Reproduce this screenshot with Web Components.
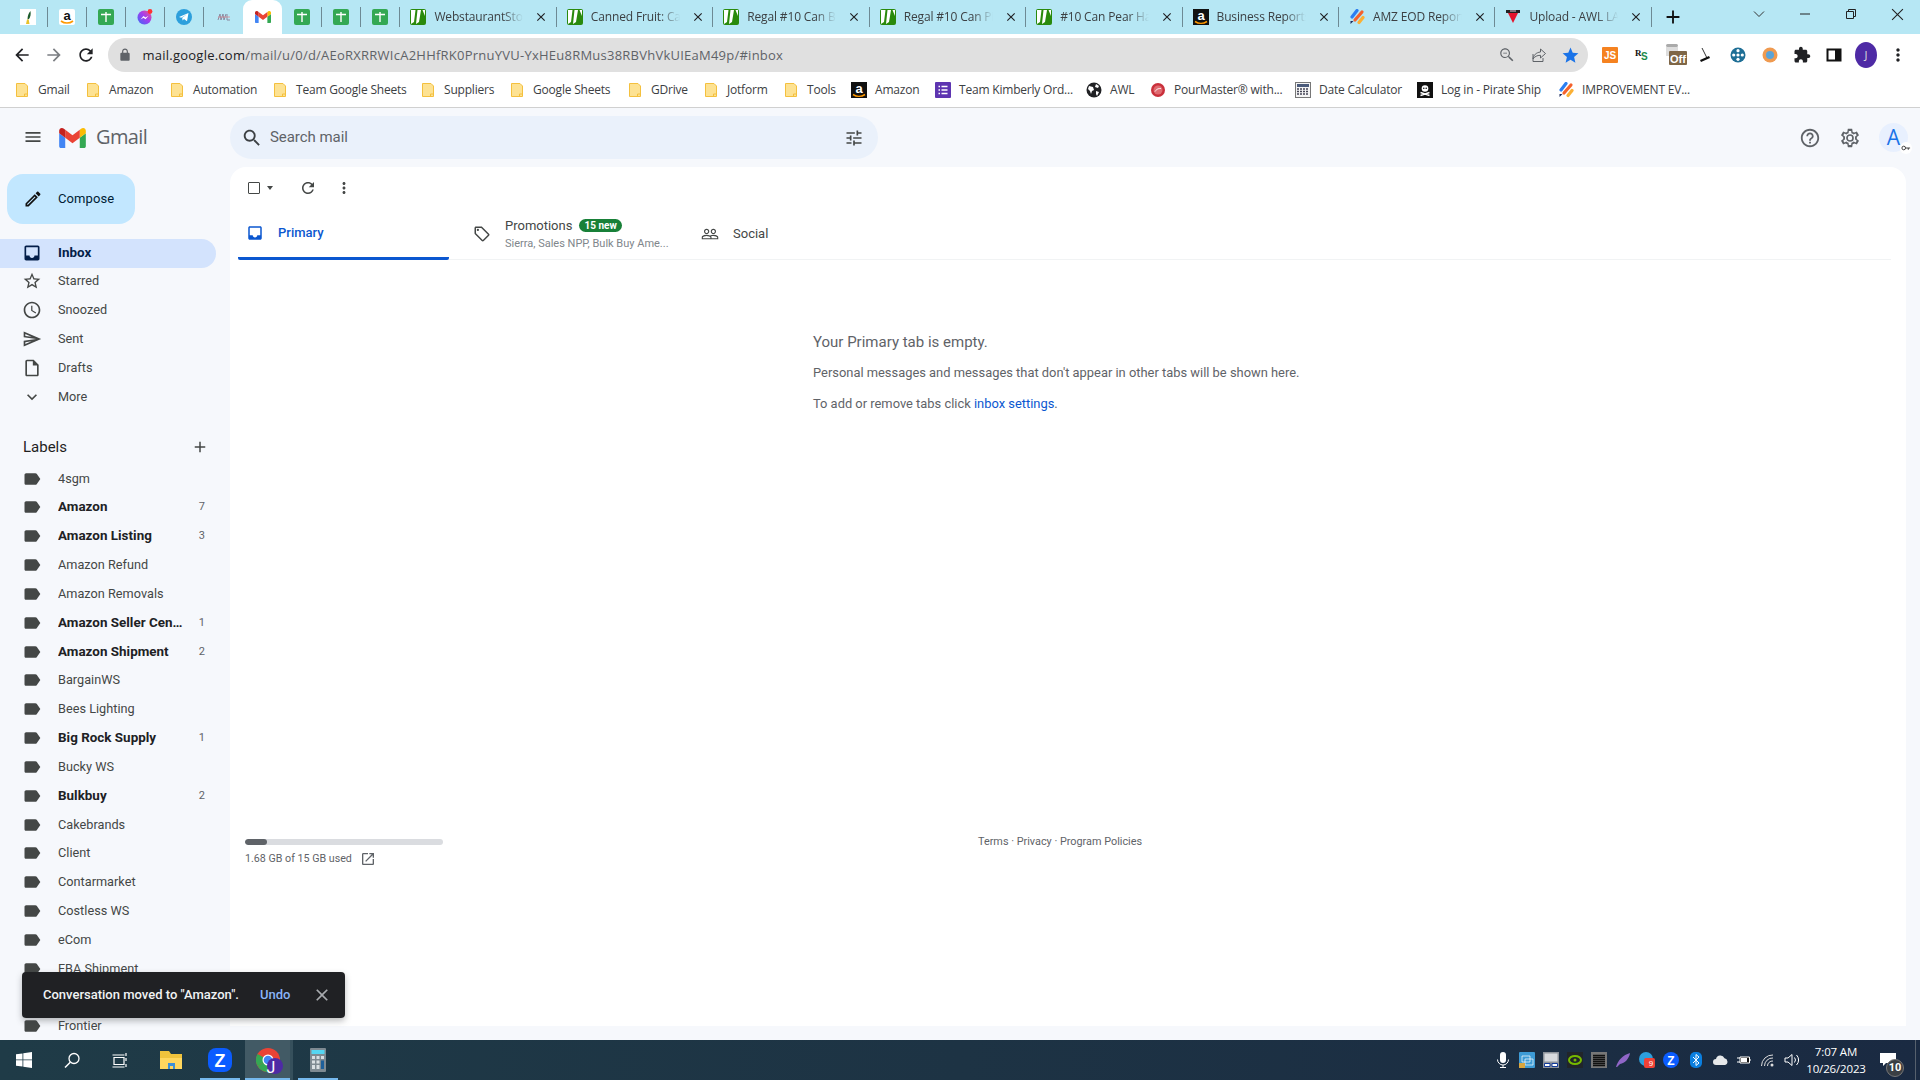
<!DOCTYPE html>
<html lang="en"><head><meta charset="utf-8"><title>Inbox</title>
<style>
html,body{margin:0;height:100%;overflow:hidden;background:#f6f8fc}
body{font-family:Roboto,"Liberation Sans",sans-serif}
</style></head><body>
<chrome-window></chrome-window>
<script>
const P={
menu:'M3 18h18v-2H3v2zm0-5h18v-2H3v2zm0-7v2h18V6H3z',
search:'M15.5 14h-.79l-.28-.27C15.41 12.59 16 11.11 16 9.5 16 5.91 13.09 3 9.5 3S3 5.91 3 9.5 5.91 16 9.5 16c1.61 0 3.09-.59 4.23-1.57l.27.28v.79l5 4.99L20.49 19l-4.99-5zm-6 0C7.01 14 5 11.99 5 9.5S7.01 5 9.5 5 14 7.01 14 9.5 11.99 14 9.5 14z',
tune:'M3 17v2h6v-2H3zM3 5v2h10V5H3zm10 16v-2h8v-2h-8v-2h-2v6h2zM7 9v2H3v2h4v2h2V9H7zm14 4v-2H11v2h10zm-6-4h2V7h4V5h-4V3h-2v6z',
edit:'M14.06 9.02l.92.92L5.92 19H5v-.92l9.06-9.06M17.66 3c-.25 0-.51.1-.7.29l-1.83 1.83 3.75 3.75 1.83-1.83c.39-.39.39-1.02 0-1.41l-2.34-2.34c-.2-.2-.45-.29-.71-.29zm-3.6 3.19L3 17.25V21h3.75L17.81 9.94l-3.75-3.75z',
inbox:'M19 3H5c-1.1 0-2 .9-2 2v14c0 1.1.9 2 2 2h14c1.1 0 2-.9 2-2V5c0-1.1-.9-2-2-2zm0 12h-4c0 1.66-1.35 3-3 3s-3-1.34-3-3H5V5h14v10z',
star:'M22 9.24l-7.19-.62L12 2 9.19 8.63 2 9.24l5.46 4.73L5.82 21 12 17.27 18.18 21l-1.63-7.03L22 9.24zM12 15.4l-3.76 2.27 1-4.28-3.32-2.88 4.38-.38L12 6.1l1.71 4.04 4.38.38-3.32 2.88 1 4.28L12 15.4z',
clock:'M11.99 2C6.47 2 2 6.48 2 12s4.47 10 9.99 10C17.52 22 22 17.52 22 12S17.52 2 11.99 2zM12 20c-4.42 0-8-3.58-8-8s3.58-8 8-8 8 3.58 8 8-3.58 8-8 8zm.5-13H11v6l5.25 3.15.75-1.23-4.5-2.67z',
send:'M4.01 6.03l7.51 3.22-7.52-1 .01-2.22m7.5 8.72L4 17.97v-2.22l7.51-1M2.01 3L2 10l15 2-15 2 .01 7L23 12 2.01 3z',
draft:'M14 2H6c-1.1 0-2 .9-2 2v16c0 1.1.9 2 2 2h12c1.1 0 2-.9 2-2V8l-6-6zM6 20V4h7v5h5v11H6z',
expand:'M16.59 8.59L12 13.17 7.41 8.59 6 10l6 6 6-6z',
label:'M17.63 5.84C17.27 5.33 16.67 5 16 5L5 5.01C3.9 5.01 3 5.9 3 7v10c0 1.1.9 1.99 2 1.99L16 19c.67 0 1.27-.33 1.63-.84L22 12l-4.37-6.16z',
add:'M19 13h-6v6h-2v-6H5v-2h6V5h2v6h6v2z',
refresh:'M17.65 6.35C16.2 4.9 14.21 4 12 4c-4.42 0-7.99 3.58-7.99 8s3.57 8 7.99 8c3.73 0 6.84-2.55 7.73-6h-2.08c-.82 2.33-3.04 4-5.65 4-3.31 0-6-2.69-6-6s2.69-6 6-6c1.66 0 3.14.69 4.22 1.78L13 11h7V4l-2.35 2.35z',
more:'M12 8c1.1 0 2-.9 2-2s-.9-2-2-2-2 .9-2 2 .9 2 2 2zm0 2c-1.1 0-2 .9-2 2s.9 2 2 2 2-.9 2-2-.9-2-2-2zm0 6c-1.1 0-2 .9-2 2s.9 2 2 2 2-.9 2-2-.9-2-2-2z',
tag:'M21.41 11.58l-9-9C12.05 2.22 11.55 2 11 2H4c-1.1 0-2 .9-2 2v7c0 .55.22 1.05.59 1.42l9 9c.36.36.86.58 1.41.58.55 0 1.05-.22 1.41-.59l7-7c.37-.36.59-.86.59-1.41 0-.55-.23-1.06-.59-1.42zM13 20.01L4 11V4h7v-.01l9 9-7 7.02zM6.5 5A1.5 1.5 0 1 0 6.5 8 1.5 1.5 0 1 0 6.5 5z',
people:'M16.5 13c-1.2 0-3.07.34-4.5 1-1.43-.67-3.3-1-4.5-1C5.33 13 1 14.08 1 16.25V19h22v-2.75c0-2.17-4.33-3.25-6.5-3.25zm-4 4.5h-10v-1.25c0-.54 2.56-1.75 5-1.75s5 1.21 5 1.75v1.25zm9 0H14v-1.25c0-.46-.2-.86-.52-1.22.88-.3 1.96-.53 3.02-.53 2.44 0 5 1.21 5 1.75v1.25zM7.5 12c1.93 0 3.5-1.57 3.5-3.5S9.43 5 7.5 5 4 6.57 4 8.5 5.57 12 7.5 12zm0-5.5c1.1 0 2 .9 2 2s-.9 2-2 2-2-.9-2-2 .9-2 2-2zm9 5.5c1.93 0 3.5-1.57 3.5-3.5S18.43 5 16.5 5 13 6.57 13 8.5s1.57 3.5 3.5 3.5zm0-5.5c1.1 0 2 .9 2 2s-.9 2-2 2-2-.9-2-2 .9-2 2-2z',
help:'M11 18h2v-2h-2v2zm1-16C6.48 2 2 6.48 2 12s4.48 10 10 10 10-4.48 10-10S17.52 2 12 2zm0 18c-4.41 0-8-3.59-8-8s3.59-8 8-8 8 3.59 8 8-3.59 8-8 8zm0-14c-2.21 0-4 1.79-4 4h2c0-1.1.9-2 2-2s2 .9 2 2c0 2-3 1.75-3 5h2c0-2.25 3-2.5 3-5 0-2.21-1.79-4-4-4z',
open:'M19 19H5V5h7V3H5c-1.11 0-2 .9-2 2v14c0 1.1.89 2 2 2h14c1.1 0 2-.9 2-2v-7h-2v7zM14 3v2h3.59l-9.83 9.83 1.41 1.41L19 6.41V10h2V3h-7z',
close:'M19 6.41L17.59 5 12 10.59 6.41 5 5 6.41 10.59 12 5 17.59 6.41 19 12 13.41 17.59 19 19 17.59 13.41 12z',
back:'M20 11H7.83l5.59-5.59L12 4l-8 8 8 8 1.41-1.41L7.83 13H20v-2z',
fwd:'M12 4l-1.41 1.41L16.17 11H4v2h12.17l-5.58 5.59L12 20l8-8z',
lock:'M18 8h-1V6c0-2.76-2.24-5-5-5S7 3.24 7 6v2H6c-1.1 0-2 .9-2 2v10c0 1.1.9 2 2 2h12c1.1 0 2-.9 2-2V10c0-1.1-.9-2-2-2zM9 6c0-1.66 1.34-3 3-3s3 1.34 3 3v2H9V6z',
zoomout:'M15.5 14h-.79l-.28-.27C15.41 12.59 16 11.11 16 9.5 16 5.91 13.09 3 9.5 3S3 5.91 3 9.5 5.91 16 9.5 16c1.61 0 3.09-.59 4.23-1.57l.27.28v.79l5 4.99L20.49 19l-4.99-5zm-6 .5C6.5 14.500 4.500 12.500 4.500 9.500S6.500 4.500 9.500 4.500 14.500 6.500 14.500 9.500 12.500 14.500 9.500 14.500zM7 9h5v1H7z',
fstar:'M12 17.27L18.18 21l-1.64-7.03L22 9.24l-7.19-.61L12 2 9.19 8.63 2 9.24l5.46 4.73L5.82 21z',
puzzle:'M20.5 11H19V7c0-1.1-.9-2-2-2h-4V3.5C13 2.12 11.88 1 10.5 1S8 2.12 8 3.5V5H4c-1.1 0-1.99.9-1.99 2v3.8H3.5c1.49 0 2.7 1.21 2.7 2.7s-1.21 2.7-2.7 2.7H2V20c0 1.1.9 2 2 2h3.8v-1.5c0-1.49 1.21-2.7 2.7-2.7 1.49 0 2.7 1.21 2.7 2.7V22H17c1.1 0 2-.9 2-2v-4h1.5c1.38 0 2.5-1.12 2.5-2.5S21.88 11 20.5 11z'
};
const ic=(n,s=20,c='#444746',st='')=>`<svg xmlns="http://www.w3.org/2000/svg" width="${s}" height="${s}" viewBox="0 0 24 24" fill="${c}" style="display:block;flex:none;${st}"><path d="${P[n]}"/></svg>`;
const GM=(w=16,h=w*.75)=>`<svg width="${w}" height="${h}" viewBox="52 42 88 66" style="display:block;flex:none"><path fill="#4285f4" d="M58 108h14V74L52 59v43c0 3.32 2.69 6 6 6"/><path fill="#34a853" d="M120 108h14c3.32 0 6-2.69 6-6V59l-20 15"/><path fill="#fbbc04" d="M120 48v26l20-15v-8c0-7.42-8.47-11.65-14.4-7.2"/><path fill="#ea4335" d="M72 74V48l24 18 24-18v26L96 92"/><path fill="#c5221f" d="M52 51v8l20 15V48l-5.6-4.2c-5.94-4.45-14.4-.22-14.4 7.2"/></svg>`;
const sv=(b,s=16,vb='0 0 16 16')=>`<svg width="${s}" height="${s}" viewBox="${vb}" style="display:block;flex:none">${b}</svg>`;
const F={
quill:sv('<rect width="16" height="16" fill="#fff"/><path d="M10.500 2C8.500 4 7.500 7 7.500 10.500L9 10C10.500 8 11 5 10.500 2z" fill="#1d5b2c"/><path d="M6 15h3.500l-.8-4.500H7z" fill="#e8c22a"/>'),
amz:sv('<rect width="16" height="16" rx="2" fill="#fff"/><text x="8" y="10.500" font-size="13" font-weight="700" text-anchor="middle" font-family="Liberation Sans" fill="#111">a</text><path d="M2 12c3.500 2.700 8.500 2.700 12 0" stroke="#f90" stroke-width="1.600" fill="none"/>'),
sheets:sv('<rect width="16" height="16" rx="2" fill="#34a853"/><path d="M3 5.500h10M8 3v10" stroke="#fff" stroke-width="1.400"/>'),
msgr:sv('<defs><linearGradient id="mg" x1="0" y1="1" x2="1" y2="0"><stop offset="0" stop-color="#3b6cf5"/><stop offset=".55" stop-color="#a33df0"/><stop offset="1" stop-color="#f8577d"/></linearGradient></defs><circle cx="7.500" cy="8.500" r="7" fill="url(#mg)"/><path d="M3.500 10.500l3-3.500 2 1.500 3-1.800-3 3.600-2-1.500z" fill="#fff"/><circle cx="13" cy="2.500" r="2.400" fill="#f33"/>'),
tg:sv('<circle cx="8" cy="8" r="8" fill="#2d9fdc"/><path d="M3 8l9.500-4L11 12.300 8 10l-1.400 1.600-.4-2.800L11 5.300 5.200 8.800z" fill="#fff"/>'),
awl:sv('<path d="M2 11L4 5l1 6 2-6 1 6 2-6M11 5v6h3" fill="none" stroke="#8a8aa0" stroke-width="1"/><path d="M2 8h12" stroke="#d9868f" stroke-width=".8"/>'),
gm:GM(16,12),
w:sv('<rect width="16" height="16" rx="2" fill="#2a8a0c"/><path d="M1 1h4.500L4 13 1 15zM7.500 1H11L9 13 6 15z" fill="#fff"/><path d="M12.500 1H15v6z" fill="#fff"/>'),
amzb:sv('<rect width="16" height="16" fill="#111"/><text x="8" y="10.500" font-size="13" font-weight="700" text-anchor="middle" font-family="Liberation Sans" fill="#fff">a</text><path d="M2 12.500c3.500 2.300 8.500 2.300 12 0" stroke="#f90" stroke-width="1.500" fill="none"/>'),
bars:sv('<path d="M3 8L8 1.500" stroke="#2d7ff0" stroke-width="3.200" stroke-linecap="round"/><path d="M6 11l7-8" stroke="#f4622d" stroke-width="3.200" stroke-linecap="round"/><path d="M10 13.500l4-5" stroke="#fbb034" stroke-width="3.200" stroke-linecap="round"/><path d="M1.500 15v-3h3z" fill="#1b2a5c"/>'),
up:sv('<rect x="1" y="1" width="14" height="3" fill="#222"/><path d="M3 4h10l-5 10z" fill="#e4132b"/><path d="M5 2h6" stroke="#e9c9d8" stroke-width="1"/>'),
folder:sv('<path d="M2.500 1.500h8.500l2.500 2.500v10.500h-11z" fill="#fde293" stroke="#f4c03e" stroke-width="1"/><path d="M10.500 14.500v-2.500h3" fill="none" stroke="#f4c03e"/>'),
form:sv('<rect width="16" height="16" rx="1" fill="#5e35b1"/><path d="M3.500 4.500h1.500M6.500 4.500h6M3.500 8h1.500M6.500 8h6M3.500 11.500h1.500M6.500 11.500h6" stroke="#fff" stroke-width="1.500"/>'),
globe:sv('<circle cx="8" cy="8" r="7.500" fill="#202124"/><path d="M3 4l4 1 1 3-2 1-1 3-1-3-2-2zM10 2l3 2-1 2-3-1zM10 9l3 1-2 4-1-2z" fill="#fff"/>'),
pour:sv('<circle cx="8" cy="8" r="7" fill="#c9303b"/><circle cx="8" cy="8" r="4.500" fill="#e06a70"/><path d="M5 9.500c2-3 4-3 6-3" stroke="#fff" stroke-width="1" fill="none"/>'),
calc:sv('<rect x=".5" y=".5" width="15" height="15" fill="#f4f4f4" stroke="#777"/><rect x="2" y="2" width="12" height="3" fill="#4a5a7a"/><path d="M2 7h12M2 9.500h12M2 12h12" stroke="#445" stroke-width="1.400" stroke-dasharray="2 1"/>'),
pirate:sv('<rect width="16" height="16" fill="#111"/><circle cx="8" cy="6.500" r="3.300" fill="#fff"/><path d="M3.500 10.500l9 3M12.500 10.500l-9 3" stroke="#fff" stroke-width="1.500"/><circle cx="6.800" cy="6.300" r=".8" fill="#111"/><circle cx="9.200" cy="6.300" r=".8" fill="#111"/>')
};
const comp=(name,css,render)=>customElements.define(name,class extends HTMLElement{
  connectedCallback(){if(this.shadowRoot)return;const r=this.attachShadow({mode:'open'});r.innerHTML=`<style>${css}</style>`+render(this);}
});
const UI='"Open Sans","Noto Sans","Liberation Sans",sans-serif';

comp('chrome-window',`:host{display:flex;flex-direction:column;width:1920px;height:1080px;overflow:hidden}`,()=>`
<tab-strip></tab-strip><omni-bar></omni-bar><bookmark-bar></bookmark-bar><gmail-app></gmail-app><task-bar></task-bar>`);

comp('chrome-tab',`:host{display:flex;align-items:center;box-sizing:border-box;position:relative;height:34px;width:39.2px;justify-content:center;flex:none;font:12px/16px ${UI};color:#3c4043}
:host([title-tab]){width:156.45px;justify-content:flex-start;padding-left:10.5px}
:host([sep])::after{content:"";position:absolute;right:-.5px;top:7px;height:20px;width:1px;background:#6d8a94}
:host([active]){background:#fff;border-radius:9px 9px 0 0}
.t{width:91px;margin-left:8px;overflow:hidden;white-space:nowrap;letter-spacing:-.15px;-webkit-mask-image:linear-gradient(90deg,#000 75%,transparent 98%);mask-image:linear-gradient(90deg,#000 75%,transparent 98%)}
.x{position:absolute;right:8px;top:10px}`,
e=>F[e.getAttribute('fav')]+(e.hasAttribute('title-tab')?`<span class="t"><slot></slot></span><span class="x">${ic('close',14,'#202124')}</span>`:''));

comp('tab-strip',`:host{display:flex;height:34px;flex:none;background:#b6e7f4;padding-left:8px;align-items:flex-start}
.plus{width:44px;height:34px;display:flex;align-items:center;justify-content:center}
.sp{flex:1}
.w{width:46px;height:28px;display:flex;align-items:center;justify-content:center}`,()=>`
${['quill','amz','sheets','msgr','tg'].map(f=>`<chrome-tab fav="${f}" sep></chrome-tab>`).join('')}
<chrome-tab fav="awl"></chrome-tab><chrome-tab fav="gm" active></chrome-tab>
${['sheets','sheets'].map(f=>`<chrome-tab fav="${f}" sep></chrome-tab>`).join('')}<chrome-tab fav="sheets" sep></chrome-tab>
<chrome-tab fav="w" title-tab sep>WebstaurantStore</chrome-tab>
<chrome-tab fav="w" title-tab sep>Canned Fruit: Canned</chrome-tab>
<chrome-tab fav="w" title-tab sep>Regal #10 Can Bartlett</chrome-tab>
<chrome-tab fav="w" title-tab sep>Regal #10 Can Pineapple</chrome-tab>
<chrome-tab fav="w" title-tab sep>#10 Can Pear Halves</chrome-tab>
<chrome-tab fav="amzb" title-tab sep>Business Reports</chrome-tab>
<chrome-tab fav="bars" title-tab sep>AMZ EOD Report</chrome-tab>
<chrome-tab fav="up" title-tab sep>Upload - AWL LABELS</chrome-tab>
<span class="plus">${ic('add',22,'#111')}</span><span class="sp"></span>
<span class="w"><svg width="12" height="12" viewBox="0 0 12 12"><path d="M1 3.500l5 5 5-5" fill="none" stroke="#333"/></svg></span>
<span class="w"><svg width="12" height="12" viewBox="0 0 12 12"><path d="M1 6h10" stroke="#222"/></svg></span>
<span class="w"><svg width="12" height="12" viewBox="0 0 12 12"><path d="M1.500 3.500h7v7h-7zM3.500 3.500v-2h7v7h-2" fill="none" stroke="#222"/></svg></span>
<span class="w"><svg width="13" height="13" viewBox="0 0 12 12"><path d="M1 1l10 10M11 1L1 11" stroke="#222"/></svg></span>`);

comp('omni-bar',`:host{display:flex;align-items:center;height:38px;flex:none;background:#fff;padding-left:6px;box-sizing:border-box;padding-top:4px}
.s{width:32px;height:34px;display:flex;align-items:center;justify-content:center;flex:none;position:relative}
.box{display:flex;align-items:center;width:1480px;height:34px;margin:0 6px;flex:none;background:#e0e0e0;border-radius:17px;box-sizing:border-box;padding-left:10px;font:13px/34px ${UI};color:#5f6368}
.url{margin-left:10.500px;white-space:nowrap;width:1350px;letter-spacing:.24px}
b{font-weight:400;color:#202124}
.box .s{width:32px}
.av{width:22px;height:26px;border-radius:50%;background:#4e2aa5;color:#ddd;font:11px/26px ${UI};text-align:center}
`,()=>`
<span class="s">${ic('back',20,'#202124')}</span><span class="s">${ic('fwd',20,'#7b7e82')}</span><span class="s">${ic('refresh',20,'#202124')}</span>
<div class="box">${ic('lock',14,'#5f6368')}<span class="url"><b>mail.google.com</b>/mail/u/0/d/AEoRXRRWIcA2HHfRK0PrnuYVU-YxHEu8RMus38RBVhVkUIEaM49p/#inbox</span>
<span class="s" style="margin-left:-2px">${ic('zoomout',18,'#5f6368')}</span><span class="s"><svg width="16" height="16" viewBox="0 0 16 16"><path d="M9.500 2l5 4.500-5 4.500V8.300C6 8.300 3.800 9.500 2 12c.5-3.800 3-6.500 7.500-7z" fill="none" stroke="#5f6368"/><path d="M2 7v7.500h10V11" fill="none" stroke="#5f6368"/></svg></span><span class="s">${ic('fstar',19,'#1a73e8')}</span></div>
<span class="s">${sv('<rect width="16" height="16" rx="1" fill="#f58220"/><text x="8" y="12" font-size="10" font-weight="700" text-anchor="middle" font-family="Liberation Sans" fill="#fff">JS</text>')}</span>
<span class="s">${sv('<text x="1" y="9" font-size="9" font-weight="700" font-family="Liberation Serif" fill="#111">R</text><text x="7" y="13" font-size="10" font-weight="700" font-family="Liberation Sans" fill="#1a8a4a">S</text>')}</span>
<span class="s" style="left:3px">${sv('<rect x="1" y="1" width="12" height="3" rx="1.500" fill="#aaa"/><rect x="1" y="4" width="12" height="9" fill="#ddd"/><rect x="4" y="8" width="18" height="14" rx="1" fill="#7e6646"/><text x="13" y="19.500" font-size="11" font-weight="700" text-anchor="middle" font-family="Liberation Sans" fill="#fff">Off</text>',24,'0 0 24 24')}</span>
<span class="s">${sv('<path d="M4 1l5 10" stroke="#333" stroke-width="1"/><path d="M3 15l9-4-1-2-9 4z" fill="#111"/>')}</span>
<span class="s">${sv('<circle cx="8" cy="8" r="7.500" fill="#1f6f96"/><circle cx="8" cy="8" r="1.600" fill="#fff"/><circle cx="8" cy="3.700" r="1.600" fill="#fff"/><circle cx="8" cy="12.300" r="1.600" fill="#fff"/><circle cx="3.700" cy="8" r="1.600" fill="#fff"/><circle cx="12.300" cy="8" r="1.600" fill="#fff"/>')}</span>
<span class="s">${sv('<circle cx="8" cy="8" r="7.500" fill="#ef9a50"/><circle cx="8" cy="8" r="4" fill="#5aa3d8"/>')}</span>
<span class="s">${ic('puzzle',18,'#202124')}</span>
<span class="s">${sv('<rect x="1.500" y="2.500" width="13" height="11" fill="#fff" stroke="#111" stroke-width="2"/><rect x="9" y="2" width="6" height="12" fill="#111"/>')}</span>
<span class="s"><span class="av">J</span></span>
<span class="s">${ic('more',20,'#202124')}</span>`);

comp('book-mark',`:host{display:flex;align-items:center;flex:none;gap:8px;font:12px/16px ${UI};color:#3c4043;white-space:nowrap;letter-spacing:-.2px}`,
e=>F[e.getAttribute('fav')||'folder']+`<span><slot></slot></span>`);
comp('bookmark-bar',`:host{display:flex;align-items:center;height:36px;flex:none;background:#fff;box-sizing:border-box;padding-left:14px;border-bottom:1px solid #d0d0d0}`,()=>
[['Gmail',71],['Amazon',84],['Automation',103],['Team Google Sheets',148],['Suppliers',89],['Google Sheets',118],['GDrive',76],['Jotform',80],['Tools',68],['Amazon',84,'amzb'],['Team Kimberly Ord...',151,'form'],['AWL',64,'globe'],['PourMaster® with...',145,'pour'],['Date Calculator',122,'calc'],['Log in - Pirate Ship',141,'pirate'],['IMPROVEMENT EV...',140,'bars']]
.map(b=>`<book-mark style="width:${b[1]}px" fav="${b[2]||'folder'}">${b[0]}</book-mark>`).join(''));

comp('gmail-app',`:host{display:grid;grid-template-columns:230px 1fr;grid-template-rows:59px 1fr;flex:1;min-height:0;background:#f6f8fc;position:relative;overflow:hidden}`,()=>`
<gm-brand></gm-brand><gm-top></gm-top><gm-rail></gm-rail><gm-main></gm-main><gm-snack></gm-snack>`);

comp('gm-brand',`:host{display:flex;align-items:center;padding:0 0 0 23px;height:59px}
.g{margin-left:10px;font:20px/30px "Open Sans",Roboto,sans-serif;color:#5f6368;letter-spacing:-.6px;position:relative;top:-1px}`,()=>`${ic('menu',20,'#444746','position:relative;top:-1px')}<span style="width:16px"></span>${GM(27,20)}<span class="g">Gmail</span>`);

comp('gm-top',`:host{display:flex;align-items:flex-start;padding-top:8px;height:59px;box-sizing:border-box}
.box{display:flex;align-items:center;width:648px;height:43px;background:#eaf1fb;border-radius:22px;padding:0 14px 0 11px;box-sizing:border-box;font:15px/20px Roboto,sans-serif;color:#5f6368;letter-spacing:-.05px}
.ph{flex:1;margin-left:7px;position:relative;top:-1px}
.r{display:flex;margin-left:auto;align-items:center;height:43px;margin-right:12px}
.i{width:41px;height:43px;display:flex;align-items:center;justify-content:center}
.a{position:relative;width:29px;height:29px;border-radius:50%;background:#e8f0fe;color:#1a73e8;font:21px/29px "Open Sans",sans-serif;text-align:center;margin-left:8px}
.k{position:absolute;right:-4px;bottom:-2px;width:12px;height:12px;border-radius:50%;background:#fff;display:flex;align-items:center;justify-content:center}`,()=>`
<div class="box">${ic('search',22,'#3c4043')}<span class="ph">Search mail</span>${ic('tune',20,'#444746')}</div>
<div class="r"><span class="i">${ic('help',22,'#5f6368')}</span><span class="i" style="position:relative;left:-1px"><svg width="22" height="22" viewBox="0 0 24 24"><path fill="#5f6368" d="M19.43 12.98c.04-.32.07-.64.07-.98s-.03-.66-.07-.98l2.11-1.65c.19-.15.24-.42.12-.64l-2-3.46c-.12-.22-.39-.3-.61-.22l-2.49 1c-.52-.4-1.08-.73-1.69-.98l-.38-2.65C14.46 2.18 14.25 2 14 2h-4c-.25 0-.46.18-.49.42l-.38 2.65c-.61.25-1.17.59-1.69.98l-2.49-1c-.23-.09-.49 0-.61.22l-2 3.46c-.13.22-.07.49.12.64l2.11 1.65c-.04.32-.07.65-.07.98s.03.66.07.98l-2.11 1.65c-.19.15-.24.42-.12.64l2 3.46c.12.22.39.3.61.22l2.49-1c.52.4 1.08.73 1.69.98l.38 2.65c.03.24.24.42.49.42h4c.25 0 .46-.18.49-.42l.38-2.65c.61-.25 1.17-.59 1.69-.98l2.49 1c.23.09.49 0 .61-.22l2-3.46c.12-.22.07-.49-.12-.64l-2.11-1.65z"/><path fill="#f6f8fc" d="M17.500 12c0-.5-.05-1-.12-1.400l1.900-1.500-1.100-1.900-2.240.9c-.7-.6-1.500-1.100-2.400-1.400l-.34-2.400h-2.400l-.34 2.400c-.9.300-1.700.8-2.400 1.400l-2.240-.9-1.100 1.900 1.900 1.500c-.14.900-.14 1.900 0 2.800l-1.900 1.500 1.100 1.900 2.240-.9c.7.6 1.500 1.100 2.400 1.400l.34 2.400h2.400l.34-2.400c.9-.3 1.700-.8 2.400-1.400l2.240.9 1.100-1.900-1.900-1.500c.07-.4.12-.9.12-1.400z"/><circle cx="12" cy="12" r="3.300" fill="none" stroke="#5f6368" stroke-width="1.800"/></svg></span>
<span class="a">A<span class="k">${sv('<circle cx="3" cy="5" r="2" fill="none" stroke="#333"/><path d="M5 5h5M8 5v2" stroke="#333"/>',10,'0 0 11 10')}</span></span></div>`);

comp('nav-row',`:host{display:flex;align-items:center;height:28.84px;flex:none;width:216px;box-sizing:border-box;padding:0 0 1.500px 22px;font:400 12.7px/20px Roboto,sans-serif;color:#444746;border-radius:0 15px 15px 0;white-space:nowrap}
:host([active]){background:#d3e3fd;color:#041e49;font-weight:700;font-size:13.4px}
:host([unread]){font-weight:700;color:#202124;font-size:13.4px}
.i{width:20px;height:20px;display:flex;margin-right:16px}
.t{flex:1;overflow:hidden;text-overflow:ellipsis;margin-right:12px;letter-spacing:.02px}
.c{font:400 11px/14px Roboto,sans-serif;color:#5f6368;padding-right:11px}`,
e=>`<span class="i">${ic(e.getAttribute('icon'),20,e.hasAttribute('active')?'#041e49':'#444746')}</span><span class="t"><slot></slot></span>${e.getAttribute('count')?`<span class="c">${e.getAttribute('count')}</span>`:''}`);

comp('gm-rail',`:host{display:block;padding-top:7px;overflow:hidden;min-height:0}
.comp{display:flex;align-items:center;width:128px;height:50px;margin-left:7px;box-sizing:border-box;padding:0 0 1px 16px;background:#c2e7ff;border-radius:16px;font:400 13px/20px Roboto,sans-serif;color:#001d35;margin-bottom:15px;letter-spacing:.1px}
.comp span{margin-left:15px}
.lab{display:flex;align-items:center;justify-content:space-between;height:30px;margin:20px 0 3px;padding:0 7px 0 23px;width:216px;box-sizing:border-box;font:400 15px/20px Roboto,sans-serif;color:#1f1f1f}`,()=>`
<div class="comp">${ic('edit',20,'#111')}<span>Compose</span></div>
<nav-row icon="inbox" active>Inbox</nav-row><nav-row icon="star">Starred</nav-row><nav-row icon="clock">Snoozed</nav-row><nav-row icon="send">Sent</nav-row><nav-row icon="draft">Drafts</nav-row><nav-row icon="expand">More</nav-row>
<div class="lab"><span>Labels</span>${ic('add',18,'#444746')}</div>
${[['4sgm'],['Amazon',7],['Amazon Listing',3],['Amazon Refund'],['Amazon Removals'],['Amazon Seller Central',1],['Amazon Shipment',2],['BargainWS'],['Bees Lighting'],['Big Rock Supply',1],['Bucky WS'],['Bulkbuy',2],['Cakebrands'],['Client'],['Contarmarket'],['Costless WS'],['eCom'],['FBA Shipment'],[''],['Frontier']].map(l=>`<nav-row icon="label" ${l[1]?`unread count="${l[1]}"`:''}>${l[0]}</nav-row>`).join('')}`);

comp('gm-main',`:host{display:flex;flex-direction:column;min-height:0;background:#fff;border-radius:16px 16px 0 0;margin:0 14px 14px 0;padding:0 15px 0 8px}
.tool{display:flex;align-items:center;height:41px;flex:none;padding-left:10px}
.tool .cb{width:10px;height:10px;border:1.5px solid #444746;border-radius:1px}
.car{width:0;height:0;border:3.5px solid transparent;border-top:4px solid #444746;margin:4px 0 0 7px}
.tabs{display:flex;height:52px;flex:none;border-bottom:1px solid #f1f3f4;box-sizing:border-box}
.body{flex:1;display:flex;flex-direction:column;padding-top:71.500px;font:12.9px/20px Roboto,sans-serif;color:#5f6368}
.msg{margin-left:575px}
.msg h2{font:400 15px/20px Roboto,sans-serif;margin:0 0 11px;color:#5f6368}
.msg p{margin:0 0 11px}
a{color:#0b57d0;text-decoration:none}
.foot{margin-top:auto;display:grid;grid-template-columns:198px 1fr;padding:0 0 159px 7px;font:10.7px/16px Roboto,sans-serif;color:#5f6368}
.bar{height:6px;background:#dadce0;border-radius:3px;overflow:hidden}
.bar i{display:block;width:22px;height:6px;background:#5f6368;border-radius:3px}
.st{display:flex;align-items:center;margin-top:6px;white-space:nowrap}
.st svg{margin-left:8px}
.terms{margin-left:535px;white-space:nowrap;margin-top:-5px;font-size:10.85px}`,()=>`
<div class="tool"><span class="cb"></span><span class="car"></span><span style="width:26px"></span>${ic('refresh',18,'#444746')}<span style="width:18px"></span>${ic('more',18,'#444746')}</div>
<div class="tabs"><gm-tab icon="inbox" active style="width:211px">Primary</gm-tab><gm-tab icon="tag" sub="Sierra, Sales NPP, Bulk Buy Ame..." badge="15 new" style="width:244px;padding-left:24px">Promotions</gm-tab><gm-tab icon="people" style="width:200px;padding-left:8px">Social</gm-tab></div>
<div class="body"><div class="msg"><h2>Your Primary tab is empty.</h2><p>Personal messages and messages that don't appear in other tabs will be shown here.</p><p>To add or remove tabs click <a href="#">inbox settings</a>.</p></div>
<div class="foot"><div><div class="bar"><i></i></div><div class="st">1.68 GB of 15 GB used ${ic('open',16,'#5f6368')}</div></div><div class="terms">Terms · Privacy · Program Policies</div></div></div>`);

comp('gm-tab',`:host{display:flex;align-items:center;height:52px;box-sizing:border-box;padding:0 0 0 8px;position:relative;font:400 13px/16px Roboto,sans-serif;color:#444746;flex:none}
:host([active]){color:#0b57d0;border-bottom:3px solid #0b57d0;border-radius:0 0 2px 2px;font-weight:500}
.i{margin-right:14px}
.m{display:flex;align-items:center;gap:7px}
.b{background:#188038;color:#fff;font:700 10px/13px Roboto,sans-serif;border-radius:7px;padding:0 5px}
.s{font:400 11px/15px Roboto,sans-serif;color:#80868b;white-space:nowrap;margin-top:2px}`,
e=>{const a=e.hasAttribute('active');return `<span class="i">${ic(e.getAttribute('icon'),18,a?'#0b57d0':'#444746')}</span><div><div class="m"><slot></slot>${e.getAttribute('badge')?`<span class="b">${e.getAttribute('badge')}</span>`:''}</div>${e.getAttribute('sub')?`<div class="s">${e.getAttribute('sub')}</div>`:''}</div>`});

comp('gm-snack',`:host{position:absolute;left:22px;top:864px;width:323px;height:46px;display:flex;align-items:center;background:#202124;border-radius:4px;box-shadow:0 3px 6px rgba(60,64,67,.35);font:500 13px/20px Roboto,sans-serif;color:#f1f3f4;box-sizing:border-box;padding-left:21px;white-space:nowrap}
.u{color:#8ab4f8;margin-left:21px;font-weight:500}
.x{position:absolute;right:13px;top:13px}`,()=>`<span>Conversation moved to "Amazon".</span><span class="u">Undo</span><span class="x">${ic('close',20,'#a8abaf')}</span>`);

comp('task-bar',`:host{display:flex;align-items:center;height:40px;flex:none;background:linear-gradient(90deg,#1f3b47,#1d3344 50%,#1a2a42);position:relative;color:#fff}
.s{width:48px;height:40px;display:flex;align-items:center;justify-content:center;flex:none;position:relative;box-sizing:border-box}
.on::after{content:"";position:absolute;left:0;right:0;bottom:0;height:2px;background:#76b9ed}
.act{background:#425a65}
.tray{margin-left:auto;display:flex;align-items:center}
.t{width:24.1px;height:40px;display:flex;align-items:center;justify-content:center;flex:none}
.clock{width:64px;text-align:center;font:11.5px/17px ${UI};letter-spacing:-.15px;white-space:nowrap}
.note{position:relative;width:40px;height:40px;display:flex;align-items:center;justify-content:center}
.n{position:absolute;left:18px;top:19px;width:18px;height:18px;border-radius:50%;background:#3a3f44;border:1px solid #777;box-sizing:border-box;font:700 11px/16px Roboto,sans-serif;text-align:center;color:#fff}
.end{width:1px;height:40px;background:#56606d;margin:0 4px 0 7px}`,()=>`
<span class="s">${sv('<path d="M0 2.300L6.500 1.400V7.500H0zM7.300 1.300L16 0v7.500H7.300zM0 8.300h6.500v6.300L0 13.700zM7.300 8.300H16V16L7.300 14.700z" fill="#fff"/>',16)}</span>
<span class="s">${sv('<circle cx="10" cy="6.500" r="5" fill="none" stroke="#fff" stroke-width="1.300"/><path d="M6.300 10.200L1 15.500" stroke="#fff" stroke-width="1.500"/>',16)}</span>
<span class="s">${sv('<path d="M.5 3h12M.5 15h12M2 5.500h10v7H2zM14 1v3M14 6v3M14 12v3" fill="none" stroke="#fff" stroke-width="1.200"/>',16)}</span>
<span class="s" style="width:54px">${sv('<path d="M0 2h9l2 3h11v15H0z" fill="#f0c33c"/><path d="M0 9h22v11H0z" fill="#ffd75e"/><rect x="8" y="14" width="7" height="6" fill="#3d90d6"/><rect x="10" y="17" width="3" height="3" fill="#ffd75e"/>',22,'0 0 22 22')}</span>
<span class="s on" style="width:40px;margin-left:2px">${sv('<rect width="24" height="24" rx="8" fill="#0b5cff"/><text x="12" y="18.500" font-size="18" font-weight="700" text-anchor="middle" font-family="Liberation Sans" fill="#fff">Z</text>',24,'0 0 24 24')}</span>
<span class="s act on" style="width:45px;margin-left:5px"><span style="position:relative;display:block;width:24px;height:24px"><svg width="24" height="24" viewBox="0 0 24 24" style="display:block"><circle cx="12" cy="12" r="12" fill="#ea4335"/><path d="M12 12L1.600 18A12 12 0 0 1 1.600 6z" fill="#34a853"/><path d="M12 12l-10.400 6A12 12 0 0 0 22.400 18z" fill="#34a853"/><path d="M12 12L22.400 18A12 12 0 0 1 12 24z" fill="#fbbc04"/><circle cx="12" cy="12" r="5.500" fill="#fff"/><circle cx="12" cy="12" r="4.300" fill="#4285f4"/></svg><span style="position:absolute;right:-3px;bottom:-2px;width:16px;height:16px;border-radius:50%;background:#4e2aa5;font:10px/16px ${UI};text-align:center">J</span></span></span>
<span style="width:3px;height:40px;background:#36505c;flex:none"></span>
<span class="s on" style="width:40px;margin-left:5px">${sv('<rect x="1" width="16" height="24" rx="1" fill="#7e8a92"/><rect x="2.500" y="2" width="13" height="4" fill="#55d6f2"/><path d="M3 8h3v3H3zM7.500 8h3v3h-3zM12 8h3v3h-3zM3 12.500h3v3H3zM7.500 12.500h3v3h-3zM3 17h3v4H3zM7.500 17h3v4h-3z" fill="#d9dfe3"/><path d="M12 12.500h3V21h-3z" fill="#1d5f9a"/>',24,'0 0 18 24')}</span>
<div class="tray">
<span class="t">${sv('<rect x="5" y="0" width="6" height="11" rx="3" fill="#fff"/><path d="M2.500 7.500a5.500 5.500 0 0 0 11 0M8 13v2.500M5 15.500h6" fill="none" stroke="#fff"/>')}</span>
<span class="t">${sv('<rect width="16" height="16" rx="1" fill="#3d9bd6"/><path d="M3 4h8v6H3zM6 7h8v6H6z" fill="none" stroke="#fff" stroke-width=".7"/><rect y="11" width="6" height="5" fill="#d8a640"/>')}</span>
<span class="t">${sv('<rect width="16" height="16" fill="#8d939b"/><rect x="1.500" y="1.500" width="13" height="8" fill="#d7dade"/><path d="M1.500 11.500h5.500v3h-5.500zM9 11.500h5.500v3H9z" fill="#fff" stroke="#123b9b"/>')}</span>
<span class="t">${sv('<rect width="16" height="16" fill="#21252a"/><ellipse cx="8" cy="8" rx="6" ry="4" fill="none" stroke="#76b900" stroke-width="2"/><circle cx="8" cy="8" r="1.500" fill="#76b900"/>')}</span>
<span class="t">${sv('<rect width="16" height="16" fill="#777"/><path d="M2 3.500h12M2 5.500h12M2 7.500h12M2 9.500h12M2 11.500h12M2 13.500h12" stroke="#111" stroke-width="1.300"/>')}</span>
<span class="t">${sv('<path d="M1 15C3 8 8 3 15 1c-1 6-5 10-10 11l-3 3z" fill="#9066c7"/>')}</span>
<span class="t">${sv('<circle cx="7" cy="7" r="7" fill="#2d9fdc"/><rect x="5" y="6" width="11" height="10" rx="2" fill="#ef4136"/><text x="12" y="14" font-size="8" text-anchor="middle" font-family="Liberation Sans" fill="#fff">9</text>')}</span>
<span class="t">${sv('<circle cx="8" cy="8" r="8" fill="#0b5cff"/><text x="8" y="12.500" font-size="12" font-weight="700" text-anchor="middle" font-family="Liberation Sans" fill="#fff">Z</text>')}</span>
<span class="t"><svg width="12" height="16" viewBox="0 0 12 16"><rect width="12" height="16" rx="5" fill="#0a7fe0"/><path d="M3 5l6 6-3 2.500v-11l3 2.500-6 6" fill="none" stroke="#fff"/></svg></span>
<span class="t">${sv('<path d="M4 13a3 3 0 0 1 0-6 4.500 4.500 0 0 1 8.500-.8A3.500 3.500 0 0 1 13 13z" fill="#e6e8ea"/>')}</span>
<span class="t">${sv('<path d="M4 5h9.500v6H4zM1 6h3M1 10h3M14 7v2" fill="#111" stroke="#fff"/><path d="M5 6h6v4H5z" fill="#fff"/>')}</span>
<span class="t">${sv('<path d="M1.500 14A11 11 0 0 1 13 3M4.500 14A8 8 0 0 1 13 6M7.500 14A5 5 0 0 1 13 9" fill="none" stroke="#ddd"/><circle cx="12" cy="13" r="1.500" fill="#ddd"/>')}</span>
<span class="t">${sv('<path d="M1 6h3l4-3.500v11L4 10H1zM10.500 5.500a4 4 0 0 1 0 5M12.500 3a7 7 0 0 1 0 10" fill="none" stroke="#fff"/>')}</span>
<span class="clock">7:07 AM<br>10/26/2023</span>
<span class="note"><svg width="16" height="14" viewBox="0 0 16 14"><path d="M0 0h16v10H6l-3 3v-3H0z" fill="#fff"/></svg><span class="n">10</span></span>
<span class="end"></span>
</div>`);
</script>
</body></html>
